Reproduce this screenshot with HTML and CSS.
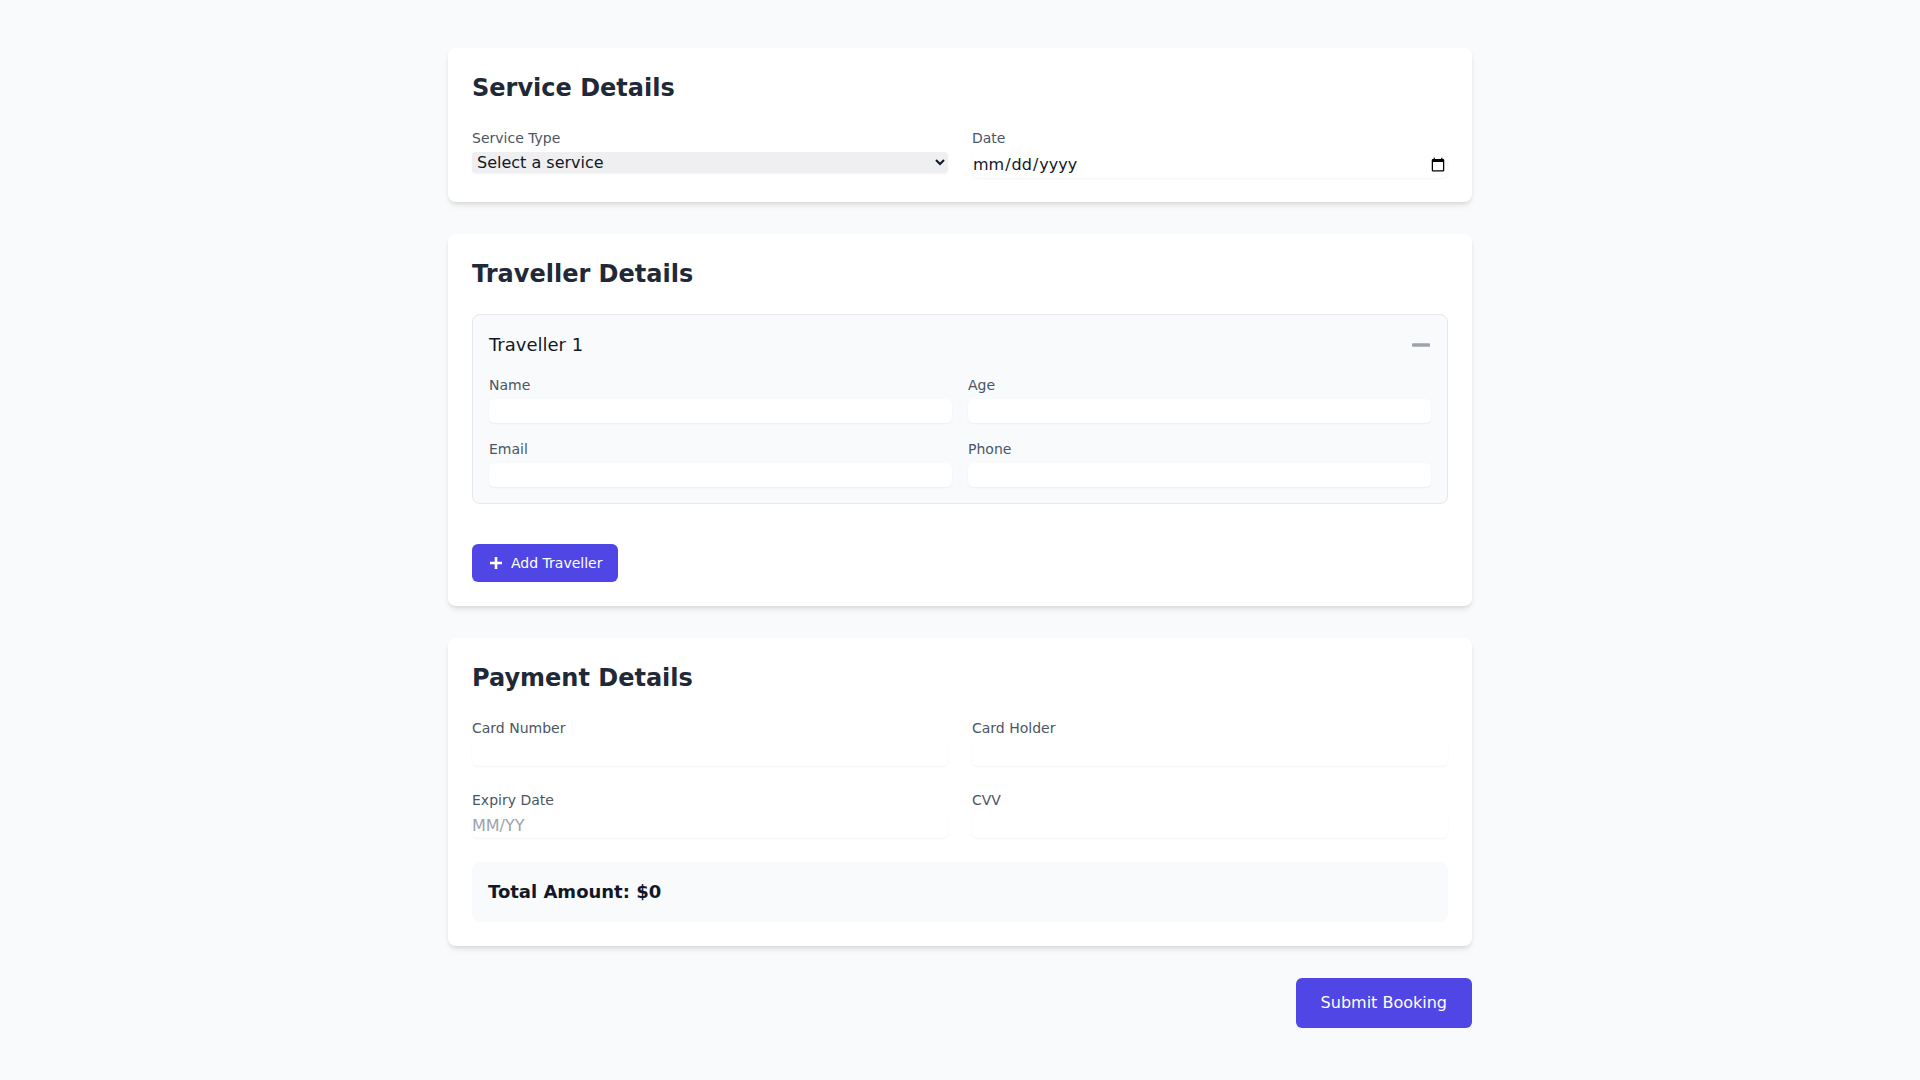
FILE: index.html
```html
<!DOCTYPE html>
<html lang="en">
<head>
<meta charset="utf-8">
<title>Booking</title>
<link rel="stylesheet" href="styles.css">
</head>
<body>
<main class="page">
  <section class="card">
    <h2 class="card-title">Service Details</h2>
    <div class="grid grid-lg">
      <div class="field">
        <label class="label" for="service">Service Type</label>
        <select id="service" class="select">
          <option>Select a service</option>
          <option>Flight</option>
          <option>Hotel</option>
        </select>
      </div>
      <div class="field">
        <label class="label" for="date">Date</label>
        <input id="date" class="input" type="date">
      </div>
    </div>
  </section>

  <section class="card">
    <h2 class="card-title">Traveller Details</h2>
    <div class="traveller">
      <div class="traveller-head">
        <h3 class="traveller-title">Traveller 1</h3>
        <button class="icon-btn" type="button" aria-label="Remove traveller">
          <svg width="20" height="20" viewBox="0 0 20 20"><rect x="1" y="8.25" width="18" height="3.5" rx="1" fill="currentColor"/></svg>
        </button>
      </div>
      <div class="grid grid-sm">
        <div class="field">
          <label class="label">Name</label>
          <input class="input" type="text">
        </div>
        <div class="field">
          <label class="label">Age</label>
          <input class="input" type="number">
        </div>
        <div class="field">
          <label class="label">Email</label>
          <input class="input" type="email">
        </div>
        <div class="field">
          <label class="label">Phone</label>
          <input class="input" type="tel">
        </div>
      </div>
    </div>
    <button class="btn btn-add" type="button">
      <svg width="16" height="16" viewBox="0 0 16 16" fill="none" stroke="currentColor" stroke-width="2.6"><path d="M8 2v12M2 8h12"/></svg>
      Add Traveller
    </button>
  </section>

  <section class="card">
    <h2 class="card-title">Payment Details</h2>
    <div class="grid grid-lg">
      <div class="field">
        <label class="label">Card Number</label>
        <input class="input" type="text">
      </div>
      <div class="field">
        <label class="label">Card Holder</label>
        <input class="input" type="text">
      </div>
      <div class="field">
        <label class="label">Expiry Date</label>
        <input class="input" type="text" placeholder="MM/YY">
      </div>
      <div class="field">
        <label class="label">CVV</label>
        <input class="input" type="text">
      </div>
    </div>
    <div class="total">Total Amount: $0</div>
  </section>

  <div class="actions">
    <button class="btn btn-submit" type="submit">Submit Booking</button>
  </div>
</main>
</body>
</html>
```

FILE: styles.css
```css
* { box-sizing: border-box; }
html, body { margin: 0; padding: 0; }
body {
  background: #f9fafb;
  font-family: "DejaVu Sans", sans-serif;
  font-size: 16px;
  line-height: 1.5;
  color: #111827;
}
.page {
  max-width: 1024px;
  margin: 0 auto;
  padding: 48px 0;
}
.card {
  background: #fff;
  border-radius: 8px;
  box-shadow: 0 4px 6px -1px rgba(0,0,0,.1), 0 2px 4px -2px rgba(0,0,0,.1);
  padding: 24px;
  margin-bottom: 32px;
}
.card-title {
  margin: 0 0 24px;
  font-size: 24px;
  line-height: 32px;
  font-weight: 700;
  color: #1f2937;
}
.grid {
  display: grid;
  grid-template-columns: 1fr 1fr;
}
.grid-lg { gap: 24px; }
.grid-sm { gap: 16px; }
.field { display: flex; flex-direction: column; min-width: 0; }
.label {
  display: block;
  font-size: 14px;
  line-height: 20px;
  color: #4b5563;
  margin-bottom: 4px;
}
.input, .select {
  width: 100%;
  margin: 0;
  padding: 0;
  border: 0;
  font: inherit;
  line-height: 24px;
  color: inherit;
  background: #fff;
  border-radius: 6px;
  box-shadow: 0 1px 2px 0 rgba(0,0,0,.05);
  outline: none;
}
.input::placeholder { color: #9ca3af; }
.select {
  height: 21px;
  line-height: 21px;
  background: #efeff1;
  padding-left: 1px;
  border-radius: 4px;
}
.traveller {
  border: 1px solid #e5e7eb;
  border-radius: 8px;
  background: #f9fafb;
  padding: 16px;
}
.traveller-head {
  display: flex;
  align-items: center;
  justify-content: space-between;
  margin-bottom: 16px;
}
.traveller-title {
  margin: 0;
  font-size: 18px;
  line-height: 28px;
  font-weight: 400;
  color: #111827;
}
.icon-btn {
  display: flex;
  padding: 0;
  border: 0;
  background: none;
  color: #9ca3af;
  cursor: pointer;
}
.btn {
  display: inline-flex;
  align-items: center;
  border: 1px solid transparent;
  border-radius: 6px;
  background: #4f46e5;
  color: #fff;
  font-family: inherit;
  cursor: pointer;
}
.btn-add {
  margin-top: 40px;
  gap: 7px;
  padding: 8px 15px;
  font-size: 14px;
  line-height: 20px;
}
.total {
  margin-top: 24px;
  background: #f9fafb;
  border-radius: 8px;
  padding: 16px;
  font-size: 18px;
  line-height: 28px;
  font-weight: 700;
  color: #111827;
}
.actions {
  display: flex;
  justify-content: flex-end;
}
.btn-submit {
  padding: 12px 24px;
  font-size: 16px;
  line-height: 24px;
}
```
